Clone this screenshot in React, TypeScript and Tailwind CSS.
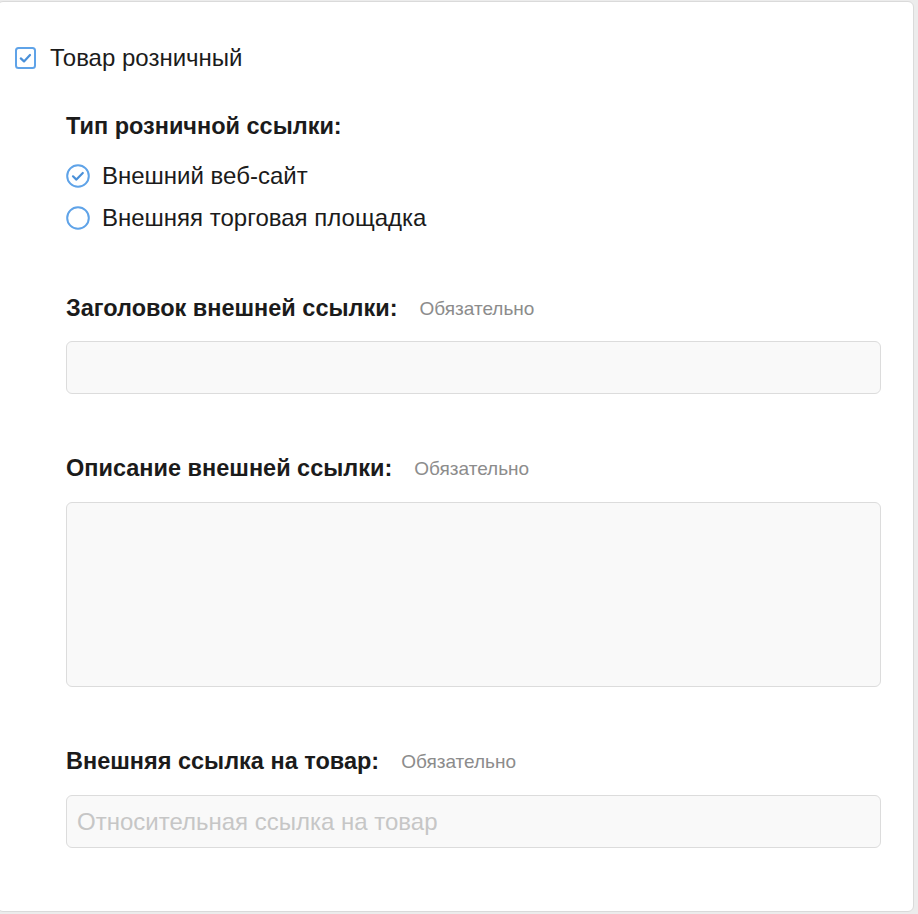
import React from "react";

const font = { fontFamily: '"Liberation Sans", Arial, sans-serif' };

function CheckBox() {
  return (
    <svg width="21" height="22" viewBox="0 0 21 22" className="shrink-0">
      <rect x="1" y="1" width="19" height="20" rx="2.5" fill="white" stroke="#5fa3e8" strokeWidth="2" />
      <path d="M5.8 11.4 L9 14.4 L15 8" fill="none" stroke="#4a90d9" strokeWidth="2.2" strokeLinecap="round" strokeLinejoin="round" />
    </svg>
  );
}

function Radio({ checked }: { checked?: boolean }) {
  return (
    <svg width="24" height="24" viewBox="0 0 24 24" className="shrink-0">
      <circle cx="12" cy="12" r="10.8" fill="white" stroke="#5fa3e8" strokeWidth="2" />
      {checked && (
        <path d="M7 12.3 L10.4 15.6 L16.8 9" fill="none" stroke="#4a90d9" strokeWidth="2.2" strokeLinecap="round" strokeLinejoin="round" />
      )}
    </svg>
  );
}

function FieldLabel({ text }: { text: string }) {
  return (
    <div className="flex h-[28px] items-center gap-[22px]">
      <span className="text-[23.5px] font-bold text-[#1b1b1b]">{text}</span>
      <span className="text-[19px] text-[#8c8c8c]">Обязательно</span>
    </div>
  );
}

export default function App() {
  return (
    <div className="h-[914px] w-[918px] overflow-hidden bg-[#ececec] pt-px pr-[4px]" style={font}>
      <div className="-ml-[3px] h-[911px] rounded-[6px] border border-[#dadada] bg-white pr-[32px]">
        {/* retail checkbox */}
        <div className="mt-[42px] flex h-[28px] items-center gap-[14px] pl-[17px]">
          <CheckBox />
          <span className="text-[24px] text-[#1b1b1b]">Товар розничный</span>
        </div>

        <div className="pl-[68px]">
          <div className="mt-[41px] flex h-[28px] items-center text-[23.5px] font-bold text-[#1b1b1b]">
            Тип розничной ссылки:
          </div>

          <div className="mt-[14px] flex flex-col">
            <label className="flex h-[42px] items-center gap-[12px]">
              <Radio checked />
              <span className="text-[24px] text-[#1b1b1b]">Внешний веб-сайт</span>
            </label>
            <label className="flex h-[42px] items-center gap-[12px]">
              <Radio />
              <span className="text-[24px] text-[#1b1b1b]">Внешняя торговая площадка</span>
            </label>
          </div>

          <div className="mt-[56px]">
            <FieldLabel text="Заголовок внешней ссылки:" />
            <input
              className="mt-[18px] block h-[53px] w-full rounded-[6px] border border-[#dcdcdc] bg-[#f9f9f9] px-[10px] text-[22px] outline-none"
              style={font}
            />
          </div>

          <div className="mt-[61px]">
            <FieldLabel text="Описание внешней ссылки:" />
            <textarea
              className="mt-[19px] block h-[185px] w-full resize-none rounded-[6px] border border-[#dcdcdc] bg-[#f9f9f9] px-[10px] py-[8px] text-[22px] outline-none"
              style={font}
            />
          </div>

          <div className="mt-[61px]">
            <FieldLabel text="Внешняя ссылка на товар:" />
            <input
              placeholder="Относительная ссылка на товар"
              className="mt-[19px] block h-[53px] w-full rounded-[6px] border border-[#dcdcdc] bg-[#f9f9f9] px-[10px] text-[24px] text-[#1b1b1b] outline-none placeholder:text-[#c6c6c6]"
              style={font}
            />
          </div>
        </div>
      </div>
    </div>
  );
}
